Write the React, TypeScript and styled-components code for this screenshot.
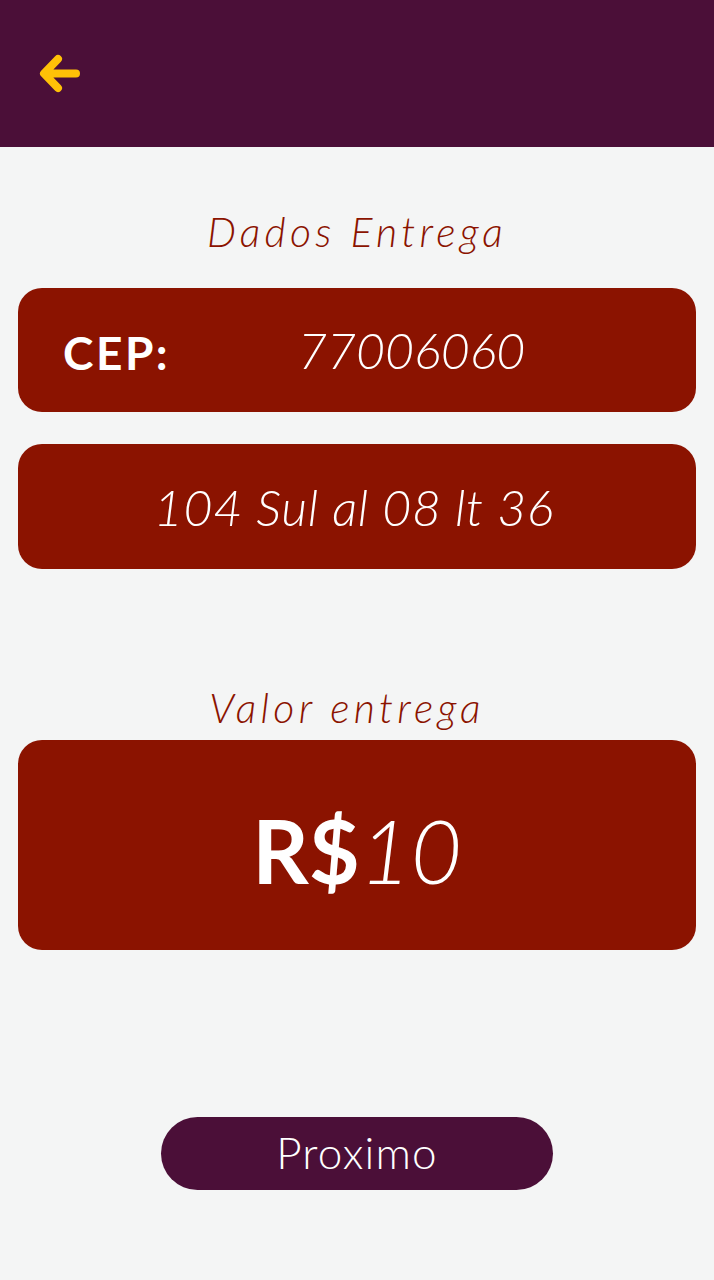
import React from "react";
import styled, { createGlobalStyle } from "styled-components";

const Global = createGlobalStyle`
  html, body { margin: 0; padding: 0; background: #f4f5f5; }
  body { font-family: "Lato", "Open Sans", sans-serif; }
  * { box-sizing: border-box; }
`;

const Page = styled.div`
  width: 714px;
  min-height: 1280px;
  background: #f4f5f5;
  display: flex;
  flex-direction: column;
`;

const Header = styled.header`
  height: 147px;
  background: #4b0f38;
  display: flex;
  align-items: flex-start;
  padding: 53px 0 0 38px;
`;

const BackButton = styled.button`
  width: 44px;
  height: 44px;
  padding: 0;
  border: none;
  background: transparent;
  display: flex;
`;

const Content = styled.main`
  display: flex;
  flex-direction: column;
  align-items: stretch;
  padding: 0 18px;
`;

const SectionTitle = styled.h2<{ $top: number; $shift?: number }>`
  margin: ${(p) => p.$top}px 0 0;
  padding-right: ${(p) => p.$shift ?? 0}px;
  text-align: center;
  font-style: italic;
  font-weight: 300;
  font-size: 41px;
  letter-spacing: 4.3px;
  line-height: 48px;
  color: #8b1300;
`;

const Card = styled.div<{ $height: number; $top: number }>`
  margin-top: ${(p) => p.$top}px;
  height: ${(p) => p.$height}px;
  background: #8b1300;
  border-radius: 24px;
  display: flex;
  align-items: center;
  color: #fff;
`;

const Label = styled.span`
  font-weight: 700;
  font-size: 46px;
  letter-spacing: 2.5px;
  padding-left: 45px;
  width: 280px;
  margin-top: 4px;
`;

const ItalicValue = styled.span<{ $center?: boolean }>`
  font-style: italic;
  font-weight: 300;
  font-size: 50px;
  ${(p) => (p.$center ? "flex: 1; text-align: center; letter-spacing: 0.7px; padding-right: 6px;" : "")}
`;

const Price = styled.div`
  flex: 1;
  text-align: center;
  font-size: 88px;
  line-height: 1;
  padding-top: 10px;
`;

const Currency = styled.span`
  font-weight: 700;
`;

const Amount = styled.span`
  font-style: italic;
  font-weight: 300;
`;

const Footer = styled.div`
  display: flex;
  justify-content: center;
  margin-top: 167px;
`;

const NextButton = styled.button`
  width: 392px;
  height: 73px;
  border: none;
  border-radius: 37px;
  background: #4b0f38;
  color: #fff;
  font-family: "Lato", sans-serif;
  font-weight: 300;
  font-size: 44px;
  letter-spacing: 1.2px;
  padding: 0 0 4px;
`;

const ArrowIcon = () => (
  <svg width="44" height="44" viewBox="0 0 44 44">
    <path
      d="M20 6 L6 20.5 L20 35 M7 20.5 H38"
      fill="none"
      stroke="#ffc107"
      strokeWidth="8"
      strokeLinecap="round"
      strokeLinejoin="round"
    />
  </svg>
);

export default function App() {
  return (
    <>
      <Global />
      <Page>
        <Header>
          <BackButton aria-label="Voltar">
            <ArrowIcon />
          </BackButton>
        </Header>
        <Content>
          <SectionTitle $top={61}>Dados Entrega</SectionTitle>
          <Card $top={32} $height={124}>
            <Label>CEP:</Label>
            <ItalicValue>77006060</ItalicValue>
          </Card>
          <Card $top={32} $height={125}>
            <ItalicValue $center>104 Sul al 08 lt 36</ItalicValue>
          </Card>
          <SectionTitle $top={115} $shift={20}>Valor entrega</SectionTitle>
          <Card $top={8} $height={210}>
            <Price>
              <Currency>R$</Currency>
              <Amount>10</Amount>
            </Price>
          </Card>
        </Content>
        <Footer>
          <NextButton>Proximo</NextButton>
        </Footer>
      </Page>
    </>
  );
}
